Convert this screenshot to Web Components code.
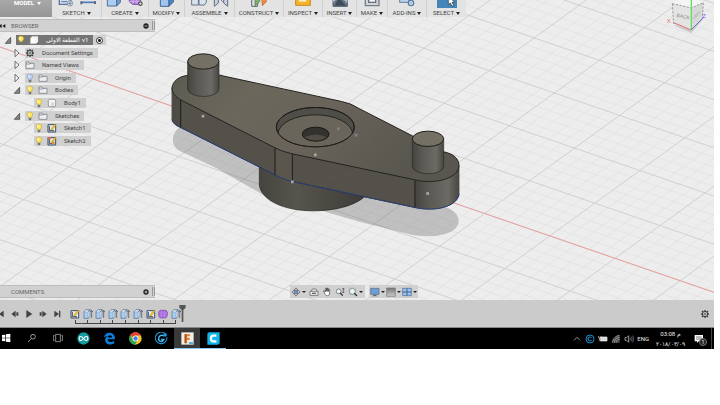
<!DOCTYPE html>
<html lang="en">
<head>
<meta charset="utf-8">
<title>Fusion workspace</title>
<style>
  body {
    margin: 0;
    box-sizing: border-box;
    min-height: 100vh;
    padding: 0 6px 56px 0;
    display: flex;
    background: #fff;
    font: 6px/8px Roboto, "Liberation Sans", sans-serif;
    color: #444;
  }
</style>
</head>
<body>
<cad-app></cad-app>

<script>
// glyphs: name -> [viewBox size, markup]; 48 for the ribbon, 30 for everything else
const pencil = '<path d="M12 17L23 4l4 3-11 13-5 2z" fill="#f4bf2a" stroke="#a57b1c"/>';
const bulb = (fill, line) => `<path d="M15 3c-6 0-9 5-8 9 1 3 4 4 4 8h8c0-4 3-5 4-8 1-4-2-9-8-9z" fill="${fill}" stroke="${line}" stroke-width="1.5"/><path d="M11 21h8v5l-2 2h-4l-2-2z" fill="#777"/><path d="M12 7v7" stroke="#fff" stroke-width="3"/>`;
const gear = '<path d="M15 3v24M3 15h24M6 6l18 18M24 6L6 24" stroke="#444" stroke-width="4"/><circle cx="15" cy="15" r="8" fill="#ccc" stroke="#444" stroke-width="3"/><circle cx="15" cy="15" r="3" fill="#ccc" stroke="#444" stroke-width="2"/>';
const sketchIcon = '<path d="M3 5h23v22H3z" fill="#e9edf2" stroke="#394c66" stroke-width="3"/><path d="M7 9v14h14" stroke="#394c66" stroke-width="3" fill="none"/>' + pencil;

const GLYPHS = {
  sketch: [48, '<path d="M4 6h34v34H4z" fill="#cfe0f2" stroke="#5d7391" stroke-width="4"/><path d="M10 32h18" stroke="#5d7391" stroke-width="3"/><circle cx="36" cy="37" r="8" fill="#dfe7f0" stroke="#5b7089" stroke-width="2"/><path d="M36 32v10M31 37h10" stroke="#445a78" stroke-width="2"/>'],
  line: [48, '<path d="M3 34h42" stroke="#4a79b5" stroke-width="5"/><path d="M1 31h6v9H1zM42 31h6v8h-6z" fill="#58677a"/>'],
  box: [48, '<path d="M4 16h28v29H4z" fill="#abcdf0" stroke="#546f92" stroke-width="3"/><path d="M32 16l11-9v27L32 45z" fill="#6d9bd0" stroke="#546f92" stroke-width="3"/>'],
  form: [48, '<path d="M4 6h34v26l-8 8H14L4 32z" fill="#b184db" stroke="#7b48ad" stroke-width="3"/><path d="M15 6v32M27 6v32M4 22h34M4 32h34" stroke="#dfc1f5" stroke-width="2"/><circle cx="37" cy="38" r="7" fill="#555"/><path d="M37 34v8M33 38h8" stroke="#fff" stroke-width="2"/>'],
  press: [48, '<path d="M4 16h26v30H4z" fill="#9dc5ef" stroke="#42658f" stroke-width="3"/><path d="M30 16l13-10v27L30 46z" fill="#4d83c1" stroke="#42658f" stroke-width="3"/>'],
  joint: [48, '<path d="M2 12h20v30H2zM24 6h22v28l-6 8H24z" fill="#dbe3ec" stroke="#66758a" stroke-width="3"/>'],
  clamp: [48, '<path d="M4 8l12 10v18L4 46zM44 8L32 18v18l12 10z" fill="#c9d1da" stroke="#606e80" stroke-width="3"/><path d="M18 20l12 14" stroke="#76849a" stroke-width="3"/>'],
  plane: [48, '<path d="M2 12h18v34H2z" fill="#d9dde2" stroke="#667" stroke-width="3"/><path d="M12 20L26 6v26L12 46z" fill="#7cae6c" stroke="#4f7b45" stroke-width="2"/><path d="M32 20L46 8v24L34 44z" fill="#f18a4a" stroke="#b25c28" stroke-width="2"/>'],
  ruler: [48, '<path d="M2 10h44v33H2z" fill="#f4b52c" stroke="#c78c19" stroke-width="3"/><path d="M12 18h22v14H12z" fill="#f8ecca"/>'],
  insert: [48, '<path d="M3 3h43v43H3z" fill="#6a7686" stroke="#56606e" stroke-width="3"/><path d="M3 34L24 16l22 20V3H3z" fill="#b2c2d8"/><path d="M20 20l22 24H8z" fill="#3f4a5a"/>'],
  print: [48, '<path d="M4 4h41v40H4z" fill="#d1d5da" stroke="#777f88" stroke-width="4"/><path d="M14 16h21v18H14z" fill="#f2f3f5" stroke="#666f7a" stroke-width="4"/><path d="M21 4v18h7V4z" fill="#707986"/>'],
  script: [48, '<path d="M2 14h28v20H2z" fill="#bad1e9" stroke="#6080a5" stroke-width="3"/><circle cx="36" cy="36" r="8" fill="#dce7f3" stroke="#5a7ca5" stroke-width="4"/><circle cx="36" cy="36" r="2" fill="#5a7ca5"/>'],
  select: [60, '<path d="M0 0h60v60H0z" fill="#4585b8"/><path d="M34 24v26l6-5 5 10 5-3-5-9h8z" fill="#fff" stroke="#233" stroke-width="2"/>'],

  bulb: [30, bulb('#ffe45c', '#b39a2e')],
  bulbOff: [30, bulb('#bcd2f5', '#7689ab')],
  gear: [30, gear],
  folder: [30, '<path d="M3 6h9l3 4h12v15H3z" fill="#eceef0" stroke="#697078" stroke-width="2"/><path d="M3 12h12l2-3" fill="none" stroke="#697078" stroke-width="2"/>'],
  body: [30, '<path d="M7 4h14q5 0 5 5v12q0 5-5 5H9q-5 0-5-5V8z" fill="#f5f5f5" stroke="#777" stroke-width="2"/><path d="M13 13h8v10h-8z" fill="#d1d3d5"/>'],
  root: [30, '<path d="M4 9l6-5h17v16l-6 6H4z" fill="#fff" stroke="#aaa"/><path d="M4 9h17v17M21 9l6-5" fill="none" stroke="#bbb"/>'],
  sketchFile: [30, sketchIcon],
  sketchRed: [30, sketchIcon + '<path d="M2 3h9v7H2z" fill="#d9694c"/><path d="M15 17h8v7h-8z" fill="#e58b3c"/>'],
  extrude: [30, '<path d="M3 8h13v20H3z" fill="#a9cdf3" stroke="#4f6a8c" stroke-width="2"/><path d="M3 8l6-6h12l-5 6M16 8l5-6v20l-5 6" fill="#dcebfa" stroke="#4f6a8c" stroke-width="2"/><path d="M26 27V5M22 9l4-5 4 5" stroke="#444" stroke-width="2" fill="none"/>'],
  formFeature: [30, '<path d="M6 4h18l4 6v11l-5 6H7l-5-6V9z" fill="#a568dc" stroke="#74439f" stroke-width="2"/><path d="M10 4v23M19 4v23M2 12h26M2 20h26" stroke="#c99af0" stroke-width="1.5"/>'],

  open: [30, '<path d="M23 7v18H7z" fill="#888" stroke="#333" stroke-width="2"/>'],
  closed: [30, '<path d="M9 4v22l12-11z" fill="#f4f4f4" stroke="#333" stroke-width="2"/>'],
  collapse: [30, '<path d="M14 9v12L5 15zM25 9v12l-9-6z" fill="#222"/>'],
  minus: [30, '<circle cx="15" cy="15" r="8" fill="#222"/><path d="M11 15h8" stroke="#fff" stroke-width="2"/>'],
  plus: [30, '<circle cx="15" cy="15" r="8" fill="#222"/><path d="M11 15h8M15 11v8" stroke="#fff" stroke-width="2"/>'],

  first: [30, '<path d="M23 5v20L9 15zM5 5h4v20H5z" fill="#444"/>'],
  prev: [30, '<path d="M17 5v20L4 15zM19 10h6v10h-6z" fill="#444"/>'],
  play: [30, '<path d="M7 3v24l18-12z" fill="#444"/>'],
  next: [30, '<path d="M13 5v20l13-10zM5 10h6v10H5z" fill="#444"/>'],
  last: [30, '<path d="M7 5v20l14-10zM21 5h4v20h-4z" fill="#444"/>'],

  orbit: [30, '<ellipse cx="15" cy="15" rx="12" ry="5" fill="none" stroke="#555" stroke-width="2"/><ellipse cx="15" cy="15" rx="5" ry="12" fill="none" stroke="#555" stroke-width="2"/><path d="M10 15h10M15 10v10" stroke="#5c8fd0" stroke-width="4"/>'],
  look: [30, '<path d="M3 13h24v12H3zM7 13l3-7h11l3 7" fill="#eee" stroke="#555" stroke-width="2"/><path d="M9 17h12v4H9z" fill="#666"/>'],
  pan: [30, '<path d="M8 18l-4-6 3-1 3 4V5h3v8-10h3v10-9h3v10l1-7h3v11c0 6-3 8-7 8s-6-2-8-7z" fill="#fff" stroke="#444" stroke-width="2"/>'],
  zoom: [30, '<circle cx="11" cy="13" r="7" fill="#eef6ff" stroke="#555" stroke-width="2"/><path d="M16 18l7 8" stroke="#333" stroke-width="4"/><path d="M25 4v13M22 7l3-4 3 4M22 14l3 4 3-4" stroke="#444" stroke-width="2" fill="none"/>'],
  fit: [30, '<path d="M3 3h20v20H3z" fill="none" stroke="#888" stroke-dasharray="3 3"/><circle cx="13" cy="13" r="9" fill="#e5f5f6" stroke="#666" stroke-width="2"/><path d="M19 19l8 8" stroke="#333" stroke-width="4"/>'],
  display: [30, '<path d="M2 4h25v18H2z" fill="#6e9fd6" stroke="#566779" stroke-width="2"/><path d="M10 23h9v3h4v2H6v-2h4z" fill="#666"/>'],
  shade: [30, '<defs><linearGradient id="g" x2="0" y2="1"><stop stop-color="#777"/><stop offset="1" stop-color="#ccc"/></linearGradient></defs><path d="M2 3h26v25H2z" fill="url(#g)" stroke="#777" stroke-width="2"/>'],
  views: [30, '<path d="M2 4h26v22H2z" fill="#9cc1ec" stroke="#456791" stroke-width="2"/><path d="M15 4v22M2 15h26" stroke="#456791" stroke-width="3"/>'],

  windows: [30, '<path d="M3 6l10-1v9H3zM15 4l13-2v12H15zM3 16h10v9L3 24zM15 16h13v12l-13-2z" fill="#fff"/>'],
  search: [30, '<circle cx="18" cy="11" r="7" fill="none" stroke="#ddd" stroke-width="2"/><path d="M13 17L3 27" stroke="#ddd" stroke-width="2"/>'],
  tasks: [30, '<path d="M8 4h14v22H8zM5 8H1v14h4M25 8h4v14h-4" fill="none" stroke="#ccc" stroke-width="2"/>'],
  arduino: [36, '<circle cx="18" cy="18" r="17" fill="#159ba0"/><path d="M18 18c-8-10-12-4-12 0s4 10 12 0 12-4 12 0-4 10-12 0z" fill="none" stroke="#fff" stroke-width="3"/>'],
  edge: [36, '<path d="M2 16C5-3 32-3 33 17v3H13c0 9 12 9 18 4v7C18 39 5 32 6 20c1-5 4-8 8-9-6 0-9 2-12 5zm11-1h12c0-8-11-8-12 0z" fill="#0b7fdb"/>'],
  chrome: [36, '<circle cx="18" cy="18" r="17" fill="#f1c232"/><path d="M18 18L3 10a17 17 0 0 1 30 0H18z" fill="#e34133"/><path d="M3 9a17 17 0 0 0 14 26l7-14-12 1z" fill="#2da44f"/><circle cx="18" cy="18" r="8" fill="#fff"/><circle cx="18" cy="18" r="6" fill="#3f7de0"/>'],
  cyber: [36, '<path d="M26 3A16 16 0 1 0 33 15" fill="none" stroke="#229bdc" stroke-width="3"/><path d="M25 11c-7-5-15 0-15 8s10 10 14 2h-7" fill="none" stroke="#48b8f0" stroke-width="4"/><circle cx="28" cy="8" r="5" fill="#1b9ce0"/>'],
  fusion: [36, '<path d="M1 1h34v34H1z" fill="#f3efe8"/><path d="M10 6h16l-2 6h-7v4h7v6h-7v9h-7z" fill="#e7802a"/><path d="M10 6h5v25h-5z" fill="#a9541b"/><path d="M22 28h11v5H22z" fill="#46a8d8"/>'],
  cura: [36, '<path d="M5 1h30v30l-5 4H1V5z" fill="#12b5ea"/><path d="M26 10H17q-6 0-6 8t6 8h9" fill="none" stroke="#fff" stroke-width="6"/>'],
  up: [30, '<path d="M6 19l9-9 9 9" fill="none" stroke="#ddd" stroke-width="2"/>'],
  cloud: [30, '<circle cx="15" cy="15" r="12" fill="none" stroke="#168bd3" stroke-width="3"/><path d="M20 11c-5-4-11-1-11 4s6 8 11 4" fill="none" stroke="#2ba8f2" stroke-width="3"/>'],
  battery: [30, '<path d="M8 9h19v12H8z" fill="#ddd" stroke="#eee" stroke-width="2"/><path d="M2 6v6h7V6M5 12v8h5" fill="none" stroke="#eee" stroke-width="2"/>'],
  wifi: [30, '<path d="M4 26C5 14 14 5 26 4v22z" fill="#4b4b4b"/><path d="M10 26c0-9 7-16 16-16M16 26c0-6 4-10 10-10M4 26C5 14 14 5 26 4" fill="none" stroke="#bbb" stroke-width="2"/>'],
  volume: [30, '<path d="M3 11h5l6-6v20l-6-6H3z" fill="none" stroke="#ddd" stroke-width="2"/><path d="M18 11q3 4 0 8M22 8q5 7 0 14M26 5q7 10 0 20" fill="none" stroke="#bbb" stroke-width="1.5"/>'],
  notes: [30, '<path d="M2 3h25v19H14l-5 5v-5H2z" fill="#fff"/><path d="M6 9h17M6 15h17" stroke="#333" stroke-width="2"/>'],
};

const RESET = `
  *, *::before, *::after { box-sizing: border-box; }
  button { font: inherit; color: inherit; background: none; border: 0; padding: 0; margin: 0; display: flex; align-items: center; }
`;

class CadIcon extends HTMLElement {
  connectedCallback() {
    const [box, markup] = GLYPHS[this.getAttribute('name')];
    this.attachShadow({ mode: 'open' }).innerHTML = `
      <style>
        :host { display: block; flex: none; width: var(--size, 10px); height: var(--size, 10px); }
        svg { display: block; width: 100%; height: 100%; }
      </style>
      <svg viewBox="0 0 ${box} ${box}" aria-hidden="true" fill="none">${markup}</svg>`;
  }
}

class CadGroup extends HTMLElement {
  connectedCallback() {
    const icons = this.getAttribute('icons').split(' ');
    this.attachShadow({ mode: 'open' }).innerHTML = `
      <style>
        ${RESET}
        :host { display: flex; flex-direction: column; align-items: center; gap: 2px; box-sizing: border-box; border-right: 1px solid #cfcfcf; }
        .icons { display: flex; gap: 6px; --size: 16px; }
        button { gap: 2px; height: 8px; }
        button::after { content: ""; border: 2px solid transparent; border-top: 3px solid #222; border-bottom: 0; }
        :host([selected]) { gap: 1px; border: 0; }
        :host([selected]) .icons { --size: 20px; }
      </style>
      <div class="icons">${icons.map(i => `<cad-icon name="${i}"></cad-icon>`).join('')}</div>
      <button><slot></slot></button>`;
  }
}

class CadToolbar extends HTMLElement {
  connectedCallback() {
    const groups = [
      ['SKETCH', 'sketch line', 50], ['CREATE', 'box form', 47], ['MODIFY', 'press', 36],
      ['ASSEMBLE', 'joint clamp', 50], ['CONSTRUCT', 'plane', 49], ['INSPECT', 'ruler', 39],
      ['INSERT', 'insert', 34], ['MAKE', 'print', 31], ['ADD-INS', 'script', 39], ['SELECT', 'select', 39],
    ];
    this.attachShadow({ mode: 'open' }).innerHTML = `
      <style>
        ${RESET}
        :host { display: flex; align-items: flex-end; align-self: flex-start; height: 17px; overflow: hidden; background: #e3e3e3; }
        .mode { width: 52px; height: 17px; padding: 0 0 11px 14px; gap: 3px; background: linear-gradient(#a8a8a8, #959595); color: #fff; font-weight: bold; line-height: 6px; }
        .mode::after { content: ""; border: 2px solid transparent; border-top: 3px solid #fff; border-bottom: 0; }
      </style>
      <button class="mode">MODEL</button>
      ${groups.map(([label, icons, w]) =>
        `<cad-group icons="${icons}" style="width:${w}px"${label === 'SELECT' ? ' selected' : ''}>${label}</cad-group>`).join('')}`;
  }
}

class CadPanelBar extends HTMLElement {
  connectedCallback() {
    this.attachShadow({ mode: 'open' }).innerHTML = `
      <style>
        ${RESET}
        :host { display: flex; align-items: center; box-sizing: border-box; width: 155px; height: 13px; background: #d1d1d1; border: solid #bdbdbd; border-width: 1px 0; color: #666; }
        .lead { width: 11px; margin-left: -3px; }
        .title { flex: 1; padding-left: 3px; }
        .grip { width: 3px; height: 9px; margin-left: 1px; border: solid #999; border-width: 0 1px; }
      </style>
      <span class="lead">${this.hasAttribute('collapsible') ? '<cad-icon name="collapse"></cad-icon>' : ''}</span>
      <span class="title"><slot></slot></span>
      <button aria-label="Toggle"><cad-icon name="${this.getAttribute('action')}"></cad-icon></button>
      <span class="grip"></span>`;
  }
}

class CadTreeRow extends HTMLElement {
  connectedCallback() {
    const icons = this.getAttribute('icons').split(' ');
    const state = this.getAttribute('state');
    const root = this.hasAttribute('root');
    this.attachShadow({ mode: 'open' }).innerHTML = `
      <style>
        ${RESET}
        :host { display: flex; align-items: center; }
        :host([level="0"]) { padding-left: 3px; }
        :host([level="1"]) { padding-left: 12px; }
        :host([level="2"]) { padding-left: 34px; }
        .twist { width: 13px; }
        .item { display: flex; align-items: center; gap: 3px; height: 10px; padding: 0 5px 0 0; background: #d0d0d0; }
        .item > .text { padding-left: 4px; }
        :host([root]) .item { background: #757575; color: #fff; }
        .pick { display: flex; align-items: center; justify-content: center; width: 13px; height: 10px; background: #d0d0d0; }
        input { appearance: none; width: 7px; height: 7px; margin: 0; border: 1px solid #333; border-radius: 50%; background: radial-gradient(#222 0 1px, #fff 2px); }
      </style>
      ${state ? `<button class="twist" aria-label="Expand"><cad-icon name="${state}"></cad-icon></button>` : ''}
      <span class="item">${icons.map(i => `<cad-icon name="${i}"></cad-icon>`).join('')}<span class="text"><slot></slot></span></span>
      ${root ? '<label class="pick"><input type="radio" checked aria-label="Activate component"></label>' : ''}`;
  }
}

class CadTree extends HTMLElement {
  connectedCallback() {
    this.attachShadow({ mode: 'open' }).innerHTML = `
      <style>
        :host { display: grid; grid-auto-rows: 1fr; height: 113px; margin-top: 2px; color: #444; }
      </style>
      <cad-tree-row level="0" state="open" icons="bulb root" root>القطعة الاولى v1</cad-tree-row>
      <cad-tree-row level="1" state="closed" icons="gear">Document Settings</cad-tree-row>
      <cad-tree-row level="1" state="closed" icons="folder">Named Views</cad-tree-row>
      <cad-tree-row level="1" state="closed" icons="bulbOff folder">Origin</cad-tree-row>
      <cad-tree-row level="1" state="open" icons="bulb folder">Bodies</cad-tree-row>
      <cad-tree-row level="2" icons="bulb body">Body1</cad-tree-row>
      <cad-tree-row level="1" state="open" icons="bulb folder">Sketches</cad-tree-row>
      <cad-tree-row level="2" icons="bulb sketchFile">Sketch1</cad-tree-row>
      <cad-tree-row level="2" icons="bulb sketchRed">Sketch2</cad-tree-row>`;
  }
}

class CadNav extends HTMLElement {
  connectedCallback() {
    const button = (name, menu) => `<button aria-label="${name}"${menu ? ' class="menu"' : ''}><cad-icon name="${name}"></cad-icon></button>`;
    this.attachShadow({ mode: 'open' }).innerHTML = `
      <style>
        ${RESET}
        :host { display: flex; gap: 4px; height: 13px; }
        div { display: flex; align-items: center; gap: 3px; padding: 0 2px 0 1px; background: #d0d0d0; }
        div + div { gap: 1px; padding: 0 1px; }
        .menu { gap: 1px; }
        .menu::after { content: ""; border: 2px solid transparent; border-top: 2px solid #222; border-bottom: 0; }
      </style>
      <div>${button('orbit', 1)}${button('look')}${button('pan')}${button('zoom')}${button('fit', 1)}</div>
      <div>${button('display', 1)}${button('shade', 1)}${button('views', 1)}</div>`;
  }
}

class CadCube extends HTMLElement {
  connectedCallback() {
    this.attachShadow({ mode: 'open' }).innerHTML = `
      <style>
        :host { display: block; width: 40px; height: 35px; }
        svg { display: block; width: 100%; height: 100%; font-family: "Liberation Sans", sans-serif; }
      </style>
      <svg viewBox="0 0 120 105">
        <path d="M22 76L76 100l36-42-34 16z" fill="#ccc"/>
        <path d="M18 8l34-16h20l40 14-34 16z" fill="#f4f4f4"/>
        <path d="M19 11l57 13-1 66-52-18z" fill="#e4e4e4"/>
        <path d="M76 24l36-16-3 46-34 36z" fill="#d9d9d9"/>
        <path d="M19 11l57 13 36-16M19 11l4 61M112 8l-3 46" fill="none" stroke="#777" stroke-width="2" stroke-dasharray="7 4"/>
        <path d="M23 68l52 22" stroke="#e26a6a" stroke-width="3"/>
        <path d="M75 90l38-38" stroke="#6868dc" stroke-width="3"/>
        <path d="M76 0v88" stroke="#5fe05f" stroke-width="4"/>
        <text x="31" y="50" font-size="15" fill="#888" transform="rotate(13 31 50)">BACK</text>
        <text x="84" y="58" font-size="12" fill="#999" transform="rotate(-42 84 58)">LEFT</text>
        <text x="2" y="68" font-size="18" fill="#ee6a6a">X</text>
        <text x="109" y="55" font-size="18" fill="#6c6cf0">Z</text>
      </svg>`;
  }
}

class CadScene extends HTMLElement {
  // the ground grid is a skewed lattice: u runs along the red axis, v across it
  grid() {
    const ox = 615, oy = 258.8, ux = 65.2, uy = 22.4, vx = -45, vy = 32.7;
    const at = (a, b) => `${(ox + a * ux + b * vx).toFixed(1)} ${(oy + a * uy + b * vy).toFixed(1)}`;
    let minor = '', major = '';
    for (let i = -100; i <= 100; i++) {
      const t = i / 5;
      const d = `M${at(t, -20)}L${at(t, 20)}M${at(-20, t)}L${at(20, t)}`;
      if (i % 5) minor += d; else major += d;
    }
    return `<path d="${minor}" stroke="#e1e1e1" stroke-width=".7"/>
      <path d="${major}" stroke="#c9c9c9" stroke-width=".8"/>
      <path d="M${at(-20, 0)}L${at(20, 0)}" stroke="#ee9a9a" stroke-width=".9"/>`;
  }

  peg(cx, cy) {
    return `<path d="M${cx - 47} ${cy}v82a47 23 0 0 0 94 0v-82z" fill="url(#side)" stroke="#292824" stroke-width="2"/>
      <ellipse cx="${cx}" cy="${cy}" rx="47" ry="23" fill="#747064" stroke="#1f1e1b" stroke-width="3"/>`;
  }

  connectedCallback() {
    const dots = [[129, 230], [466, 346], [803, 462], [397, 427]];
    this.attachShadow({ mode: 'open' }).innerHTML = `
      <style>
        :host { display: block; background: #ededed; overflow: hidden; }
        svg { display: block; width: 100%; height: 100%; }
      </style>
      <svg viewBox="0 0 714 301" preserveAspectRatio="xMidYMid slice" fill="none" role="img" aria-label="Model">
        <defs>
          <linearGradient id="side"><stop stop-color="#45443f"/><stop offset=".3" stop-color="#595852"/><stop offset=".75" stop-color="#6b6a64"/><stop offset="1" stop-color="#484742"/></linearGradient>
          <linearGradient id="top" x2="1" y2=".35"><stop stop-color="#5d5b52"/><stop offset=".3" stop-color="#6b675b"/><stop offset=".6" stop-color="#69635a"/><stop offset="1" stop-color="#58564e"/></linearGradient>
          <linearGradient id="base"><stop stop-color="#45443e"/><stop offset=".35" stop-color="#56544d"/><stop offset="1" stop-color="#3d3c36"/></linearGradient>
          <clipPath id="bore"><ellipse cx="466" cy="263" rx="116" ry="58"/></clipPath>
        </defs>
        ${this.grid()}
        <g transform="translate(160 40) scale(.33333)">
          <path d="M62 262C35 280 28 316 58 334L170 386l150 86v-90zM480 512l130 38 130 32c60 16 152 10 156-36 0-20-16-34-36-42l-260-34z" fill="#777" fill-opacity=".38"/>
          <path d="M298 370v66c4 46 75 78 160 78 70 0 130-17 157-44v-90z" fill="url(#base)" stroke="#22211e" stroke-width="2"/>
          <path d="M36 145v95q2 14 26 24l283 142q24 14 52 20l368 78c62 14 130-4 132-42v-84z" fill="#54504a" stroke="#22211e" stroke-width="2"/>
          <path d="M36 145v95q2 14 26 24v-84z" fill="#4d4b45"/>
          <path d="M345 320v86q24 14 52 20v-84z" fill="#5a554d"/>
          <path d="M765 420v84c62 14 130-4 132-42v-84z" fill="url(#side)"/>
          <path d="M36 240q2 14 26 24l283 142q24 14 52 20l368 78c62 14 130-4 132-42" stroke="#2b3f78" stroke-width="3"/>
          <path d="M62 181C40 168 36 155 36 145c2-20 22-35 46-37l96-1 367 79q30 6 50 20l162 83 93 48c32 6 47 22 47 41-2 32-47 50-97 48q-20-1-35-5L397 343q-32-7-52-18z" fill="url(#top)" stroke="#24231f" stroke-width="3"/>
          <path d="M62 181v83M345 325v81M397 343v83M765 422v82" stroke="#1f1e1b" stroke-width="3"/>
          <path d="M150 200c160 26 270 18 430 80l160 72M300 330c0-50 80-92 168-92s168 46 168 98-60 78-150 78" stroke="#5f6474" stroke-opacity=".35" stroke-width="2"/>
          <ellipse cx="466" cy="263" rx="117" ry="59" fill="#504e48" stroke="#1f1e1b" stroke-width="3"/>
          <g clip-path="url(#bore)">
            <ellipse cx="466" cy="284" rx="112" ry="58" fill="#69655b" stroke="#25241f" stroke-width="3"/>
          </g>
          <ellipse cx="466" cy="263" rx="117" ry="59" stroke="#1f1e1b" stroke-width="3"/>
          <ellipse cx="467" cy="284" rx="40" ry="21" fill="#34322e" stroke="#191815" stroke-width="3"/>
          <path d="M433 293q34 20 68 0-34-16-68 0z" fill="#504d46"/>
          ${this.peg(130, 66)}
          ${this.peg(804, 298)}
          ${dots.map(([x, y]) => `<path d="M${x - 4} ${y - 4}h8v8h-8z" fill="#aaa9a3"/>`).join('')}
          <path d="M531 264h8v8h-8zM584 283h8v8h-8z" fill="#7f8086"/>
        </g>
      </svg>`;
  }
}

class CadWorkspace extends HTMLElement {
  connectedCallback() {
    this.attachShadow({ mode: 'open' }).innerHTML = `
      <style>
        :host { position: relative; display: flex; flex-direction: column; flex: 1; }
        cad-scene { position: absolute; inset: 0; }
        cad-cube { position: absolute; top: 0; right: 8px; }
        .over { position: relative; display: flex; flex-direction: column; flex: 1; }
        .browser { margin-top: 2px; }
        footer { display: flex; margin-top: auto; padding: 0 7px 2px 0; }
        .edge { flex: 1; }
      </style>
      <cad-scene></cad-scene>
      <div class="over">
        <cad-toolbar></cad-toolbar>
        <cad-panel-bar class="browser" action="minus" collapsible>BROWSER</cad-panel-bar>
        <cad-tree></cad-tree>
        <footer>
          <div class="edge"><cad-panel-bar action="plus">COMMENTS</cad-panel-bar></div>
          <cad-nav></cad-nav>
          <div class="edge"></div>
        </footer>
      </div>
      <cad-cube></cad-cube>`;
  }
}

class CadTimeline extends HTMLElement {
  connectedCallback() {
    const controls = ['first', 'prev', 'play', 'next', 'last'];
    const features = ['sketchFile', 'extrude', 'extrude', 'extrude', 'extrude', 'extrude', 'sketchFile', 'formFeature', 'extrude'];
    this.attachShadow({ mode: 'open' }).innerHTML = `
      <style>
        ${RESET}
        :host { display: flex; align-items: center; height: 27px; background: #cbcbcb; border-bottom: 1px solid #888; }
        .controls { display: flex; gap: 4px; margin-left: -4px; }
        .features { display: grid; grid-auto-flow: column; grid-auto-columns: 1fr; width: 113px; margin: 5px 0 0 7px; justify-items: center; }
        .features button { flex-direction: column; width: 100%; }
        .features button::after { content: ""; width: 100%; height: 4px; margin-top: 1px; background: linear-gradient(#444, #444) center / 1px 4px no-repeat, linear-gradient(#444, #444) bottom / 100% 1px no-repeat; }
        .features button:first-child::after { width: 50%; align-self: flex-end; background-position: left, bottom; }
        .features button:last-child::after { width: 50%; align-self: flex-start; background-position: right, bottom; }
        .marker { width: 7px; height: 17px; margin-left: -3px; }
        .gear { margin: 0 4px 0 auto; }
      </style>
      <div class="controls">${controls.map(c => `<button aria-label="${c}"><cad-icon name="${c}"></cad-icon></button>`).join('')}</div>
      <div class="features">${features.map(f => `<button aria-label="${f}"><cad-icon name="${f}"></cad-icon></button>`).join('')}</div>
      <svg class="marker" viewBox="0 0 21 51"><path d="M1 0h19v8l-7 7v36H8V15L1 8z" fill="#555"/></svg>
      <button class="gear" aria-label="Settings"><cad-icon name="gear"></cad-icon></button>`;
  }
}

class CadTaskbar extends HTMLElement {
  connectedCallback() {
    const apps = ['windows', 'search', 'tasks', 'arduino', 'edge', 'chrome', 'cyber', 'fusion', 'cura'];
    const tray = ['up', 'cloud', 'battery', 'wifi', 'volume'];
    const small = ['windows', 'search', 'tasks'];
    this.attachShadow({ mode: 'open' }).innerHTML = `
      <style>
        ${RESET}
        :host { display: flex; align-items: center; height: 21px; background: #000; color: #eee; }
        .apps { display: grid; grid-auto-flow: column; grid-auto-columns: 1fr; width: 233px; height: 100%; margin-left: -7px; }
        .apps button { justify-content: center; --size: 13px; border-bottom: 1px solid transparent; }
        .apps .small { --size: 10px; }
        .apps .fusion { background: #393939; border-color: #8cc4ee; }
        .apps .cura { border-color: #8cc4ee; }
        .tray { display: flex; align-items: center; gap: 3px; margin-left: auto; }
        .clock { display: flex; flex-direction: column; align-items: center; line-height: 10px; margin: 0 9px 0 7px; }
        .notes { position: relative; margin-right: 7px; }
        .badge { position: absolute; left: 5px; top: 4px; width: 8px; height: 8px; border-radius: 50%; border: 1px solid #777; background: #222; line-height: 6px; text-align: center; }
        .desk { width: 3px; align-self: stretch; border-left: 1px solid #444; }
      </style>
      <div class="apps">${apps.map(a => `<button class="${small.includes(a) ? 'small' : a}" aria-label="${a}"><cad-icon name="${a}"></cad-icon></button>`).join('')}</div>
      <div class="tray">
        ${tray.map(t => `<button aria-label="${t}"><cad-icon name="${t}"></cad-icon></button>`).join('')}
        <span>ENG</span>
      </div>
      <div class="clock"><span>03:08 م</span><span>٢٠١٨/٠٣/٠٩</span></div>
      <button class="notes" aria-label="Notifications"><cad-icon name="notes"></cad-icon><span class="badge">1</span></button>
      <span class="desk"></span>`;
  }
}

class CadApp extends HTMLElement {
  connectedCallback() {
    this.attachShadow({ mode: 'open' }).innerHTML = `
      <style>
        :host { display: flex; flex-direction: column; flex: 1; overflow: hidden; }
      </style>
      <cad-workspace></cad-workspace>
      <cad-timeline></cad-timeline>
      <cad-taskbar></cad-taskbar>`;
  }
}

customElements.define('cad-icon', CadIcon);
customElements.define('cad-group', CadGroup);
customElements.define('cad-toolbar', CadToolbar);
customElements.define('cad-panel-bar', CadPanelBar);
customElements.define('cad-tree-row', CadTreeRow);
customElements.define('cad-tree', CadTree);
customElements.define('cad-nav', CadNav);
customElements.define('cad-cube', CadCube);
customElements.define('cad-scene', CadScene);
customElements.define('cad-workspace', CadWorkspace);
customElements.define('cad-timeline', CadTimeline);
customElements.define('cad-taskbar', CadTaskbar);
customElements.define('cad-app', CadApp);
</script>
</body>
</html>
